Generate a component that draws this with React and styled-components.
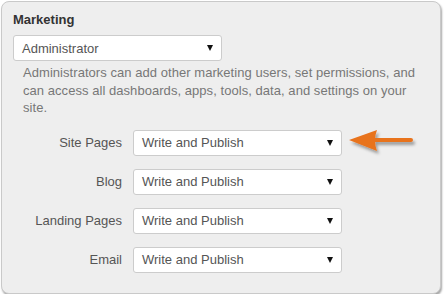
import React from "react";
import styled, { createGlobalStyle } from "styled-components";

const Global = createGlobalStyle`
  html, body { margin: 0; padding: 0; background: #ffffff; }
  body { font-family: "Liberation Sans", Arial, sans-serif; }
`;

const Panel = styled.section`
  box-sizing: border-box;
  margin: 1px 0 0 1px;
  width: 440px;
  height: 293px;
  padding: 9px 11px 0 11px;
  border: 1px solid #c9c9c9;
  border-radius: 8px;
  background: #eeeeee;
  box-shadow: 1px 2px 2px rgba(0, 0, 0, 0.35);
  font-family: "Liberation Sans", Arial, sans-serif;
`;

const Title = styled.h3`
  margin: 0;
  font-size: 13px;
  line-height: 17px;
  font-weight: bold;
  color: #333333;
`;

const SelectBox = styled.div`
  box-sizing: border-box;
  width: 209px;
  height: 26px;
  flex: none;
  display: flex;
  align-items: center;
  justify-content: space-between;
  padding: 0 8px 0 8px;
  background: #ffffff;
  border: 1px solid #cccccc;
  border-radius: 3px;
  font-size: 13px;
  color: #555555;
  margin-top: ${(p) => p.$mt || 0}px;
`;

const Caret = styled.span`
  width: 0;
  height: 0;
  border-left: 3px solid transparent;
  border-right: 3px solid transparent;
  border-top: 6px solid #111111;
`;

const Description = styled.p`
  margin: 3px 0 0 10px;
  font-size: 13px;
  line-height: 17.5px;
  letter-spacing: 0.05px;
  color: #777777;
`;

const Rows = styled.div`
  display: flex;
  flex-direction: column;
  gap: 13px;
  margin-top: 13px;
`;

const Row = styled.div`
  display: flex;
  align-items: center;
  gap: 11px;
`;

const Label = styled.span`
  width: 109px;
  text-align: right;
  font-size: 13px;
  color: #555555;
`;

const Pointer = styled.svg`
  flex: none;
  margin-left: -5px;
  margin-top: -4px;
  overflow: visible;
`;

function Select({ value, mt }) {
  return (
    <SelectBox $mt={mt}>
      <span>{value}</span>
      <Caret />
    </SelectBox>
  );
}

function Arrow() {
  return (
    <Pointer width="70" height="28" viewBox="0 0 70 28">
      <defs>
        <filter id="sh" x="-20%" y="-40%" width="150%" height="190%">
          <feDropShadow dx="2" dy="3" stdDeviation="1.6" floodColor="#000" floodOpacity="0.35" />
        </filter>
      </defs>
      <g filter="url(#sh)" fill="#e8731f">
        <path d="M1 13 L29 3 Q25 13 29 24 Z" />
        <rect x="25" y="11" width="40" height="4" rx="2" />
      </g>
    </Pointer>
  );
}

const rows = [
  { label: "Site Pages", arrow: true },
  { label: "Blog" },
  { label: "Landing Pages" },
  { label: "Email" },
];

export default function App() {
  return (
    <>
      <Global />
      <Panel>
        <Title>Marketing</Title>
        <Select value="Administrator" mt={7} />
        <Description>
          Administrators can add other marketing users, set permissions, and
          can access all dashboards, apps, tools, data, and settings on your
          site.
        </Description>
        <Rows>
          {rows.map((r) => (
            <Row key={r.label}>
              <Label>{r.label}</Label>
              <Select value="Write and Publish" />
              {r.arrow && <Arrow />}
            </Row>
          ))}
        </Rows>
      </Panel>
    </>
  );
}
